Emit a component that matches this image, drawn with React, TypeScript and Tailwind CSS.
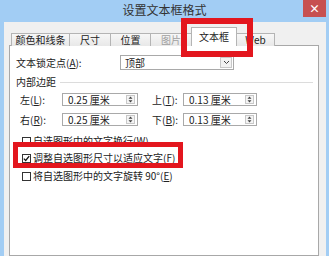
import React from 'react';

const Key = ({ k }: { k: string }) => <span className="underline">{k}</span>;

const Spinner = ({ value }: { value: string }) => (
  <div className="flex h-[13px] items-center border border-[#a9a9a9] bg-white">
    <span className="flex-1 whitespace-nowrap pl-[5px] leading-none">{value}</span>
    <span className="mr-[2px] flex h-[9px] w-[9px] items-center justify-center border border-[#c8c8c8] bg-[#f4f4f4]">
      <svg width="5" height="7" viewBox="0 0 5 7">
        <path d="M0.5 2.8 L2.5 0.6 L4.5 2.8 Z M0.5 4.2 L2.5 6.4 L4.5 4.2 Z" fill="#444" />
      </svg>
    </span>
  </div>
);

const Check = ({ checked, children }: { checked?: boolean; children: React.ReactNode }) => (
  <div className="flex h-[12px] items-center gap-[2px] pl-[12px]">
    <span className="flex h-[9px] w-[9px] items-center justify-center border border-[#333] bg-white">
      {checked && (
        <svg width="7" height="7" viewBox="0 0 7 7">
          <path d="M0.8 3.6 L2.7 5.5 L6.2 1.2" fill="none" stroke="#111" strokeWidth="1.3" />
        </svg>
      )}
    </span>
    <span className="whitespace-nowrap leading-none">{children}</span>
  </div>
);

const tabs = [
  { label: '颜色和线条', w: 'w-[59px]' },
  { label: '尺寸', w: 'w-[42px]' },
  { label: '位置', w: 'w-[41px]' },
  { label: '图片', w: 'w-[42px]', dim: true },
];

export default function App() {
  return (
    <div
      className="relative flex h-[256px] w-[329px] flex-col overflow-hidden bg-[#a2cdf4] text-[10px] text-[#222]"
      style={{ fontFamily: '"Noto Sans CJK SC", "Microsoft YaHei", sans-serif' }}
    >
      {/* title bar */}
      <div className="flex h-[22px] shrink-0 items-center justify-center pb-[2px] text-[12px] text-[#333]">
        设置文本框格式
      </div>
      <div className="absolute right-[3px] top-0 flex h-[17px] w-[23px] items-center justify-center bg-[#c75050] text-[11px] font-bold leading-none text-white">
        ×
      </div>

      {/* dialog body */}
      <div className="ml-[4px] mr-[3px] flex flex-1 flex-col bg-[#f0f0f0] pl-[5px] pr-[7px] pt-[5px]">
        {/* tabs */}
        <div className="relative z-10 flex h-[19px] items-end pl-[2px]">
          {tabs.map((t) => (
            <div
              key={t.label}
              className={`${t.w} -ml-px flex h-[13px] items-center justify-center border border-b-0 border-[#b4b4b4] bg-gradient-to-b from-[#f7f7f7] to-[#e8e8e8] leading-none first:ml-0 ${t.dim ? 'text-[#a0a0a0]' : ''}`}
            >
              {t.label}
            </div>
          ))}
          <div className="-ml-px flex h-[19px] w-[46px] items-center justify-center border border-b-0 border-[#b4b4b4] bg-white pb-[1px] leading-none">
            文本框
          </div>
          <div className="-ml-px flex h-[13px] w-[39px] items-center justify-center border border-b-0 border-[#b4b4b4] bg-gradient-to-b from-[#f7f7f7] to-[#e8e8e8] leading-none">
            Web
          </div>
        </div>

        {/* panel */}
        <div className="-mt-px flex flex-1 flex-col border border-[#a8a8a8] bg-white pt-[9px]">
          <div className="flex h-[15px] items-center">
            <span className="w-[110px] pl-[6px] leading-none">
              文本锁定点(<Key k="A" />):
            </span>
            <div className="flex h-[15px] w-[114px] items-center border border-[#a9a9a9] bg-white">
              <span className="flex-1 pl-[4px] leading-none">顶部</span>
              <span className="mr-px flex h-[11px] w-[12px] items-center justify-center border border-[#c8c8c8] bg-[#f2f2f2]">
                <svg width="7" height="5" viewBox="0 0 7 5">
                  <path d="M1 1 L3.5 3.5 L6 1" fill="none" stroke="#444" strokeWidth="1" />
                </svg>
              </span>
            </div>
          </div>

          <div className="mt-[6px] flex h-[12px] items-center pl-[6px]">
            <span className="leading-none">内部边距</span>
            <span className="ml-[4px] mr-[5px] h-px flex-1 bg-[#dcdcdc]" />
          </div>

          <div className="mt-[5px] flex h-[13px] items-center">
            <span className="w-[52px] pl-[10px] leading-none">
              左(<Key k="L" />):
            </span>
            <div className="w-[76px]">
              <Spinner value="0.25 厘米" />
            </div>
            <span className="w-[45px] pl-[14px] leading-none">
              上(<Key k="T" />):
            </span>
            <div className="w-[74px]">
              <Spinner value="0.13 厘米" />
            </div>
          </div>

          <div className="mt-[7px] flex h-[13px] items-center">
            <span className="w-[52px] pl-[10px] leading-none">
              右(<Key k="R" />):
            </span>
            <div className="w-[76px]">
              <Spinner value="0.25 厘米" />
            </div>
            <span className="w-[45px] pl-[14px] leading-none">
              下(<Key k="B" />):
            </span>
            <div className="w-[74px]">
              <Spinner value="0.13 厘米" />
            </div>
          </div>

          <div className="mt-[9px]">
            <Check>
              自选图形中的文字换行(<Key k="W" />)
            </Check>
          </div>
          <div className="mt-[5px]">
            <Check checked>
              调整自选图形尺寸以适应文字(<Key k="F" />)
            </Check>
          </div>
          <div className="mt-[6px]">
            <Check>
              将自选图形中的文字旋转 90°(<Key k="E" />)
            </Check>
          </div>
        </div>
      </div>

      {/* red highlight boxes */}
      <div className="pointer-events-none absolute left-[181px] top-[18px] z-20 h-[39px] w-[72px] border-[6px] border-[#e3161e]" />
      <div className="pointer-events-none absolute left-[13px] top-[142px] z-20 h-[26px] w-[170px] border-[5px] border-[#e3161e]" />
    </div>
  );
}
